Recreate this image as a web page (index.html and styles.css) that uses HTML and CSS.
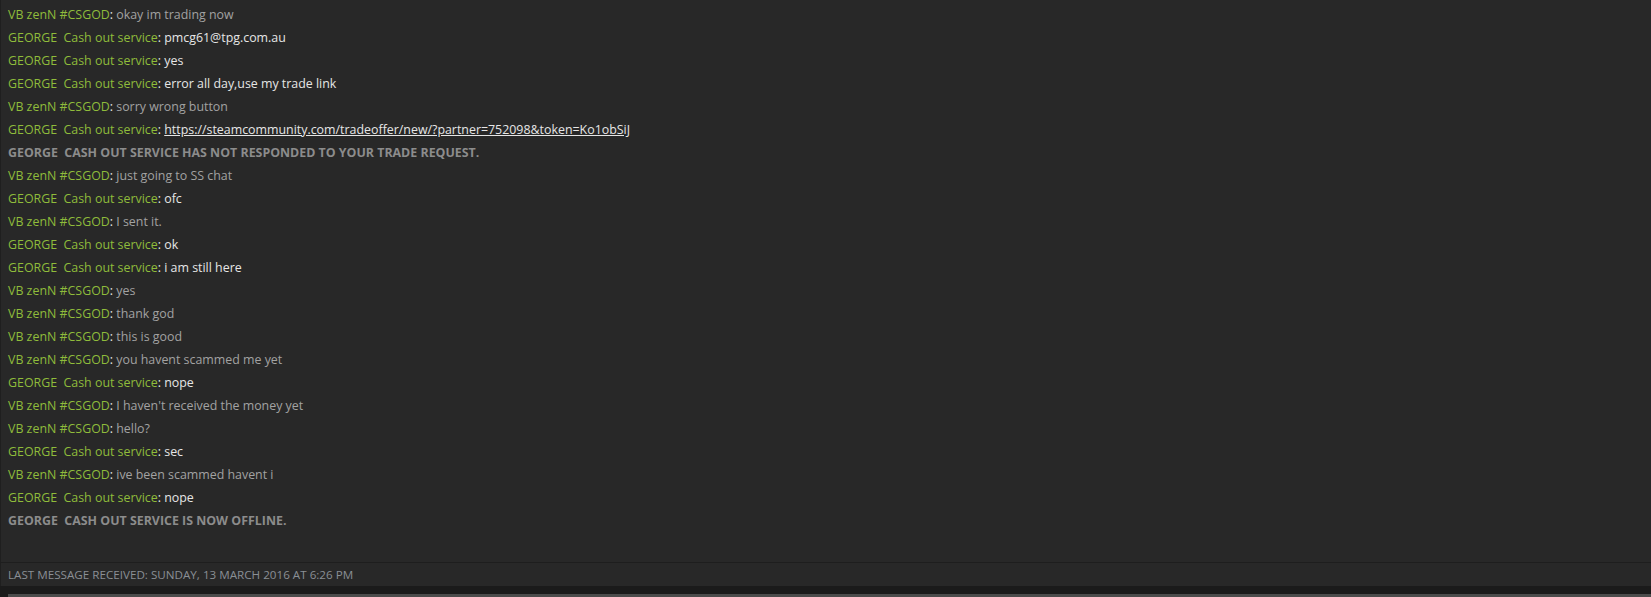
FILE: index.html
```html
<!DOCTYPE html>
<html>
<head>
<meta charset="utf-8">
<link rel="stylesheet" href="styles.css">
</head>
<body>
<div class="window">
  <div class="chat">
    <div class="msg mine"><span class="name">VB zenN #CSGOD</span><span class="colon">:</span> <span class="text">okay im trading now</span></div>
    <div class="msg"><span class="name">GEORGE&nbsp; Cash out service</span><span class="colon">:</span> <span class="text">pmcg61@tpg.com.au</span></div>
    <div class="msg"><span class="name">GEORGE&nbsp; Cash out service</span><span class="colon">:</span> <span class="text">yes</span></div>
    <div class="msg"><span class="name">GEORGE&nbsp; Cash out service</span><span class="colon">:</span> <span class="text">error all day,use my trade link</span></div>
    <div class="msg mine"><span class="name">VB zenN #CSGOD</span><span class="colon">:</span> <span class="text">sorry wrong button</span></div>
    <div class="msg"><span class="name">GEORGE&nbsp; Cash out service</span><span class="colon">:</span> <a class="text link">https://steamcommunity.com/tradeoffer/new/?partner=752098&amp;token=Ko1obSiJ</a></div>
    <div class="msg system">GEORGE&nbsp; CASH OUT SERVICE HAS NOT RESPONDED TO YOUR TRADE REQUEST.</div>
    <div class="msg mine"><span class="name">VB zenN #CSGOD</span><span class="colon">:</span> <span class="text">just going to SS chat</span></div>
    <div class="msg"><span class="name">GEORGE&nbsp; Cash out service</span><span class="colon">:</span> <span class="text">ofc</span></div>
    <div class="msg mine"><span class="name">VB zenN #CSGOD</span><span class="colon">:</span> <span class="text">I sent it.</span></div>
    <div class="msg"><span class="name">GEORGE&nbsp; Cash out service</span><span class="colon">:</span> <span class="text">ok</span></div>
    <div class="msg"><span class="name">GEORGE&nbsp; Cash out service</span><span class="colon">:</span> <span class="text">i am still here</span></div>
    <div class="msg mine"><span class="name">VB zenN #CSGOD</span><span class="colon">:</span> <span class="text">yes</span></div>
    <div class="msg mine"><span class="name">VB zenN #CSGOD</span><span class="colon">:</span> <span class="text">thank god</span></div>
    <div class="msg mine"><span class="name">VB zenN #CSGOD</span><span class="colon">:</span> <span class="text">this is good</span></div>
    <div class="msg mine"><span class="name">VB zenN #CSGOD</span><span class="colon">:</span> <span class="text">you havent scammed me yet</span></div>
    <div class="msg"><span class="name">GEORGE&nbsp; Cash out service</span><span class="colon">:</span> <span class="text">nope</span></div>
    <div class="msg mine"><span class="name">VB zenN #CSGOD</span><span class="colon">:</span> <span class="text">I haven't received the money yet</span></div>
    <div class="msg mine"><span class="name">VB zenN #CSGOD</span><span class="colon">:</span> <span class="text">hello?</span></div>
    <div class="msg"><span class="name">GEORGE&nbsp; Cash out service</span><span class="colon">:</span> <span class="text">sec</span></div>
    <div class="msg mine"><span class="name">VB zenN #CSGOD</span><span class="colon">:</span> <span class="text">ive been scammed havent i</span></div>
    <div class="msg"><span class="name">GEORGE&nbsp; Cash out service</span><span class="colon">:</span> <span class="text">nope</span></div>
    <div class="msg system">GEORGE&nbsp; CASH OUT SERVICE IS NOW OFFLINE.</div>
  </div>
  <div class="footer">LAST MESSAGE RECEIVED: SUNDAY, 13 MARCH 2016 AT 6:26 PM</div>
  <div class="strip"><div class="scrollbar"></div></div>
</div>
</body>
</html>
```
FILE: styles.css
```css
html, body {
  margin: 0;
  padding: 0;
  background: #282828;
}
.window {
  width: 1651px;
  height: 597px;
  display: flex;
  flex-direction: column;
  font-family: "Open Sans", "Noto Sans", sans-serif;
  font-size: 12.4px;
}
.chat {
  height: 562px;
  box-sizing: border-box;
  padding: 3px 0 0 7px;
  background: #282828;
  border-left: 1px solid #1f1f1f;
}
.msg {
  line-height: 23px;
  height: 23px;
  white-space: nowrap;
  color: #e6e6e6;
}
.name {
  color: #8fbc3b;
}
.colon {
  color: #e6e6e6;
}
.text {
  color: #e6e6e6;
}
.mine .text {
  color: #a2a2a2;
}
.link {
  text-decoration: underline;
}
.system {
  color: #8c8c8c;
  font-weight: bold;
}
.footer {
  height: 24px;
  box-sizing: border-box;
  border-top: 1px solid #1e1e1e;
  border-left: 1px solid #1f1f1f;
  background: #282828;
  padding-left: 7px;
  line-height: 23px;
  font-size: 11.65px;
  color: #8a8f95;
}
.strip {
  height: 11px;
  background: #1b1b1b;
  display: flex;
  align-items: flex-end;
  padding-left: 8px;
}
.scrollbar {
  flex: 1;
  height: 3px;
  background: #4c4c4c;
}
```
